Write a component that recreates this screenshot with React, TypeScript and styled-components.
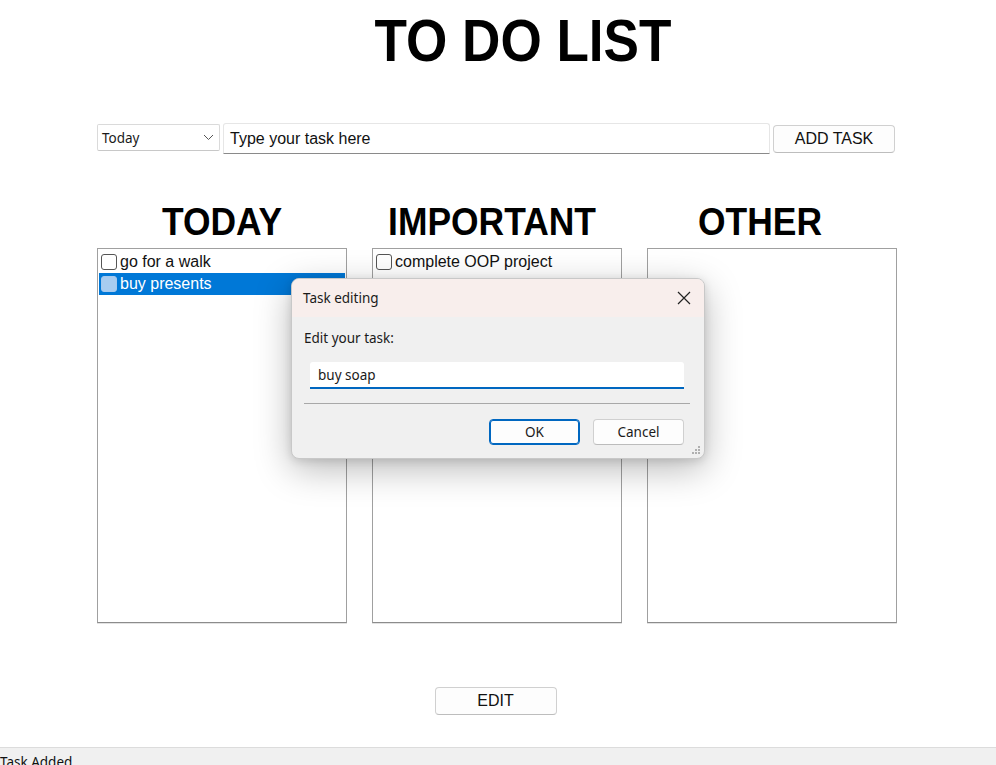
import React from "react";
import styled, { createGlobalStyle } from "styled-components";

const Global = createGlobalStyle`
  html, body { margin: 0; padding: 0; background: #ffffff; overflow: hidden; }
  body { font-family: "Liberation Sans", Arial, sans-serif; color: #000; }
  * { box-sizing: border-box; }
`;

const Page = styled.div`
  position: relative;
  width: 996px;
  height: 765px;
  display: flex;
  flex-direction: column;
  overflow: hidden;
  & > * { flex: none; }
`;

const TitleRow = styled.div`
  display: flex;
  justify-content: center;
  padding-top: 12px;
  padding-left: 50px;
  height: 123px;
`;

const Title = styled.h1`
  margin: 0;
  font-family: "Liberation Sans", Arial, sans-serif;
  font-weight: 700;
  font-size: 59px;
  line-height: 59px;
  height: 59px;
  transform: scaleX(0.9);
  white-space: nowrap;
`;

const Main = styled.div`
  width: 799px;
  margin-left: 97px;
  display: flex;
  flex-direction: column;
`;

const InputRow = styled.div`
  display: flex;
  align-items: flex-start;
  gap: 3px;
  height: 31px;
`;

const SelectBox = styled.div`
  margin-top: 1px;
  width: 123px;
  height: 27px;
  background: #fff;
  border: 1px solid #dadada;
  border-bottom-color: #c8c8c8;
  border-radius: 2px;
  display: flex;
  align-items: center;
  justify-content: space-between;
  padding: 0 5px 0 4px;
  font-family: "Noto Sans", "Open Sans", sans-serif;
  font-size: 13.5px;
  color: #1a1a1a;
`;

const TaskInput = styled.div`
  width: 547px;
  height: 31px;
  background: #fff;
  border: 1px solid #e6e6e6;
  border-bottom: 1px solid #8a8a8a;
  border-radius: 3px 3px 0 0;
  display: flex;
  align-items: center;
  padding-left: 6px;
  font-size: 16px;
  color: #111;
`;

const Button = styled.div<{ $w: number }>`
  width: ${(p) => p.$w}px;
  height: 28px;
  background: #fdfdfd;
  border: 1px solid #d0d0d0;
  border-bottom-color: #bdbdbd;
  border-radius: 4px;
  display: flex;
  align-items: center;
  justify-content: center;
  font-family: "Liberation Sans", Arial, sans-serif;
  font-size: 16px;
  color: #111;
`;

const AddButton = styled(Button)`
  margin-top: 2px;
`;

const Columns = styled.div`
  margin-top: 49px;
  display: grid;
  grid-template-columns: repeat(3, 250px);
  column-gap: 25px;
`;

const Column = styled.div`
  display: flex;
  flex-direction: column;
`;

const Heading = styled.h2<{ $shift: number }>`
  margin: 0;
  height: 45px;
  font-family: "Liberation Sans", Arial, sans-serif;
  font-weight: 700;
  font-size: 38.5px;
  line-height: 38px;
  text-align: center;
  white-space: nowrap;
  transform: translateX(${(p) => p.$shift}px) scaleX(0.92);
`;

const ListBox = styled.div`
  height: 375px;
  border: 1px solid #a0a0a0;
  border-bottom-color: #8c8c8c;
  box-shadow: 0 1px 0 #e2e2e2;
  background: #fff;
  padding: 2px 1px;
  display: flex;
  flex-direction: column;
`;

const Item = styled.div<{ $sel?: boolean }>`
  height: 22px;
  display: flex;
  align-items: center;
  gap: 3px;
  padding-left: 2px;
  background: ${(p) => (p.$sel ? "#0078d7" : "transparent")};
  color: ${(p) => (p.$sel ? "#ffffff" : "#111111")};
  font-family: "Liberation Sans", Arial, sans-serif;
  font-size: 16px;
`;

const Check = styled.span<{ $sel?: boolean }>`
  width: 16px;
  height: 16px;
  border-radius: 3px;
  flex: none;
  border: 1px solid ${(p) => (p.$sel ? "#a6c9ee" : "#555")};
  background: ${(p) => (p.$sel ? "#a8ccf0" : "#fff")};
`;

const Footer = styled.div`
  display: flex;
  justify-content: center;
  margin-top: 64px;
  padding-right: 2px;
`;

const EditButton = styled(Button)``;

const StatusBar = styled.div`
  margin-top: 32px;
  height: 24px;
  background: #f0f0f0;
  border-top: 1px solid #dcdcdc;
  padding-top: 5px;
  font-family: "Noto Sans", "Open Sans", sans-serif;
  font-size: 13.5px;
  line-height: 18px;
  color: #111;
`;

/* Dialog overlay */
const Dialog = styled.div`
  position: absolute;
  left: 291px;
  top: 278px;
  width: 414px;
  height: 181px;
  border-radius: 8px;
  border: 1px solid #c8c8c8;
  background: #f0f0f0;
  box-shadow: 0 10px 36px rgba(0, 0, 0, 0.28), 0 2px 8px rgba(0, 0, 0, 0.12);
  overflow: hidden;
  display: flex;
  flex-direction: column;
  font-family: "Noto Sans", "Open Sans", sans-serif;
  color: #1a1a1a;
`;

const DialogTitle = styled.div`
  height: 38px;
  background: #f8eeec;
  display: flex;
  align-items: center;
  justify-content: space-between;
  padding: 0 13px 0 11px;
  font-size: 13.5px;
`;

const CloseIcon = styled.svg`
  width: 14px;
  height: 14px;
`;

const DialogBody = styled.div`
  flex: 1;
  position: relative;
  display: flex;
  flex-direction: column;
  padding: 12px 14px 0 12px;
`;

const Label = styled.div`
  font-size: 13.5px;
  line-height: 18px;
`;

const EditInput = styled.div`
  margin: 15px 6px 0 6px;
  height: 27px;
  background: #fff;
  border-bottom: 2px solid #0067c0;
  border-radius: 3px 3px 0 0;
  display: flex;
  align-items: center;
  padding-left: 8px;
  font-size: 13.5px;
`;

const Separator = styled.div`
  margin-top: 14px;
  height: 1px;
  background: #a8a8a8;
`;

const DialogButtons = styled.div`
  margin-top: 15px;
  display: flex;
  justify-content: flex-end;
  gap: 13px;
  padding-right: 6px;
`;

const DlgButton = styled.div<{ $primary?: boolean }>`
  width: 91px;
  height: 26px;
  border-radius: 4px;
  background: #fdfdfd;
  border: 1px solid ${(p) => (p.$primary ? "#0067c0" : "#d0d0d0")};
  ${(p) => (p.$primary ? "box-shadow: inset 0 0 0 1px #0067c0;" : "border-bottom-color: #bcbcbc;")}
  display: flex;
  align-items: center;
  justify-content: center;
  font-size: 13.5px;
`;

const Grip = styled.svg`
  position: absolute;
  right: 3px;
  bottom: 3px;
  width: 10px;
  height: 10px;
`;

export default function App() {
  return (
    <>
      <Global />
      <Page>
        <TitleRow>
          <Title>TO DO LIST</Title>
        </TitleRow>
        <Main>
          <InputRow>
            <SelectBox>
              <span>Today</span>
              <svg width="11" height="7" viewBox="0 0 11 7">
                <path d="M1 1 L5.5 5.5 L10 1" fill="none" stroke="#555" strokeWidth="1" />
              </svg>
            </SelectBox>
            <TaskInput>Type your task here</TaskInput>
            <AddButton $w={122}>ADD TASK</AddButton>
          </InputRow>
          <Columns>
            <Column>
              <Heading $shift={0}>TODAY</Heading>
              <ListBox>
                <Item>
                  <Check />
                  go for a walk
                </Item>
                <Item $sel>
                  <Check $sel />
                  buy presents
                </Item>
              </ListBox>
            </Column>
            <Column>
              <Heading $shift={-5}>IMPORTANT</Heading>
              <ListBox>
                <Item>
                  <Check />
                  complete OOP project
                </Item>
              </ListBox>
            </Column>
            <Column>
              <Heading $shift={-12}>OTHER</Heading>
              <ListBox />
            </Column>
          </Columns>
          <Footer>
            <EditButton $w={122}>EDIT</EditButton>
          </Footer>
        </Main>
        <StatusBar>Task Added</StatusBar>

        <Dialog>
          <DialogTitle>
            <span>Task editing</span>
            <CloseIcon viewBox="0 0 14 14">
              <path d="M1 1 L13 13 M13 1 L1 13" stroke="#222" strokeWidth="1.2" fill="none" />
            </CloseIcon>
          </DialogTitle>
          <DialogBody>
            <Label>Edit your task:</Label>
            <EditInput>buy soap</EditInput>
            <Separator />
            <DialogButtons>
              <DlgButton $primary>OK</DlgButton>
              <DlgButton>Cancel</DlgButton>
            </DialogButtons>
            <Grip viewBox="0 0 10 10">
              <g fill="#b0b0b0">
                <rect x="7" y="1" width="2" height="2" />
                <rect x="4" y="4" width="2" height="2" />
                <rect x="7" y="4" width="2" height="2" />
                <rect x="1" y="7" width="2" height="2" />
                <rect x="4" y="7" width="2" height="2" />
                <rect x="7" y="7" width="2" height="2" />
              </g>
            </Grip>
          </DialogBody>
        </Dialog>
      </Page>
    </>
  );
}
